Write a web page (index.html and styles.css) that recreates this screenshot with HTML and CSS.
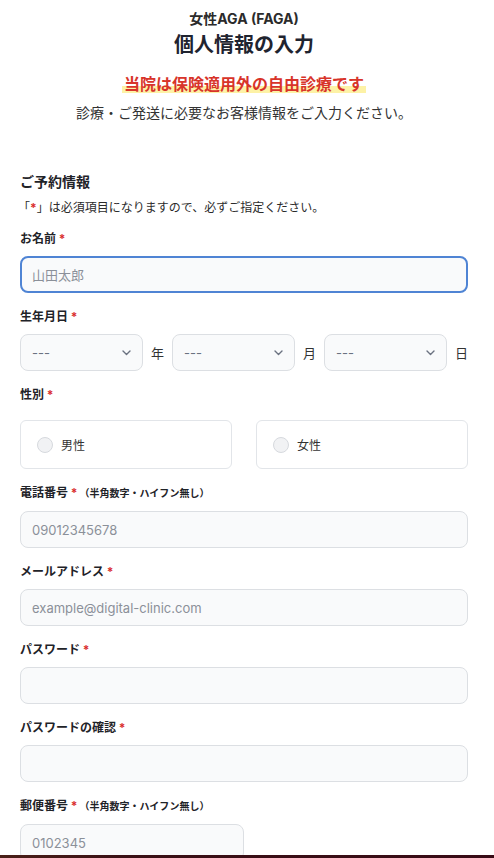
FILE: index.html
```html
<!DOCTYPE html>
<html lang="ja">
<head>
<meta charset="utf-8">
<title>個人情報の入力</title>
<link rel="stylesheet" href="styles.css">
</head>
<body>
<div class="page">
  <header class="head">
    <p class="head-sub">女性AGA (FAGA)</p>
    <h1 class="head-title">個人情報の入力</h1>
    <p class="head-alert"><span class="marker">当院は保険適用外の自由診療です</span></p>
    <p class="head-desc">診療・ご発送に必要なお客様情報をご入力ください。</p>
  </header>

  <section class="section">
    <h2 class="section-title">ご予約情報</h2>
    <p class="section-note">「<span class="req">*</span>」は必須項目になりますので、必ずご指定ください。</p>

    <div class="field first">
      <label class="label">お名前 <span class="req">*</span></label>
      <input class="input focused" type="text" placeholder="山田太郎">
    </div>

    <div class="field">
      <label class="label">生年月日 <span class="req">*</span></label>
      <div class="date-row">
        <div class="select-wrap">
          <select class="select"><option>---</option></select>
          <svg class="chev" width="9" height="6" viewBox="0 0 9 6"><path d="M1 1l3.5 3.5L8 1" fill="none" stroke="#6b7280" stroke-width="1.4" stroke-linecap="round" stroke-linejoin="round"/></svg>
        </div>
        <span class="unit">年</span>
        <div class="select-wrap">
          <select class="select"><option>---</option></select>
          <svg class="chev" width="9" height="6" viewBox="0 0 9 6"><path d="M1 1l3.5 3.5L8 1" fill="none" stroke="#6b7280" stroke-width="1.4" stroke-linecap="round" stroke-linejoin="round"/></svg>
        </div>
        <span class="unit">月</span>
        <div class="select-wrap">
          <select class="select"><option>---</option></select>
          <svg class="chev" width="9" height="6" viewBox="0 0 9 6"><path d="M1 1l3.5 3.5L8 1" fill="none" stroke="#6b7280" stroke-width="1.4" stroke-linecap="round" stroke-linejoin="round"/></svg>
        </div>
        <span class="unit">日</span>
      </div>
    </div>

    <div class="field">
      <label class="label">性別 <span class="req">*</span></label>
      <div class="radio-row">
        <label class="radio-card"><span class="radio"></span><span class="radio-text">男性</span></label>
        <label class="radio-card"><span class="radio"></span><span class="radio-text">女性</span></label>
      </div>
    </div>

    <div class="field">
      <label class="label">電話番号 <span class="req">*</span><span class="hint">（半角数字・ハイフン無し）</span></label>
      <input class="input" type="text" placeholder="09012345678">
    </div>

    <div class="field">
      <label class="label">メールアドレス <span class="req">*</span></label>
      <input class="input" type="text" placeholder="example@digital-clinic.com">
    </div>

    <div class="field">
      <label class="label">パスワード <span class="req">*</span></label>
      <input class="input" type="password">
    </div>

    <div class="field">
      <label class="label">パスワードの確認 <span class="req">*</span></label>
      <input class="input" type="password">
    </div>

    <div class="field">
      <label class="label">郵便番号 <span class="req">*</span><span class="hint">（半角数字・ハイフン無し）</span></label>
      <input class="input half" type="text" placeholder="0102345">
    </div>
  </section>
</div>
<div class="bottom-bar"></div>
</body>
</html>
```

FILE: styles.css
```css
* { box-sizing: border-box; }
html, body {
  margin: 0;
  padding: 0;
  background: #fff;
}
body {
  font-family: Inter, "Noto Sans CJK JP", sans-serif;
  color: #1f2328;
  overflow: hidden;
}
p, h1, h2 { margin: 0; }

.page {
  width: 448px;
  margin-left: 20px;
  padding-bottom: 40px;
}

.head { text-align: center; }
.head-sub {
  margin-top: 9px;
  font-size: 14px;
  line-height: 20px;
  font-weight: 700;
  color: #2b2b2b;
}
.head-title {
  margin-top: 2px;
  font-size: 20px;
  line-height: 28px;
  font-weight: 700;
  color: #1f2430;
}
.head-alert {
  margin-top: 13px;
  font-size: 16px;
  line-height: 24px;
  font-weight: 700;
  color: #d8342a;
}
.marker {
  padding: 0 2px;
  background: linear-gradient(transparent 58%, #fdf2a6 58%, #fdf2a6 96%, transparent 96%);
}
.head-desc {
  margin-top: 7px;
  font-size: 14px;
  line-height: 20px;
  color: #333;
}

.section { margin-top: 49px; }
.section-title {
  font-size: 14px;
  line-height: 20px;
  font-weight: 700;
  color: #1f2328;
}
.section-note {
  margin-top: 7px;
  font-size: 12px;
  line-height: 18px;
  color: #2b2b2b;
  margin-left: -2px;
}
.req { color: #d92c2c; font-weight: 700; }

.field { margin-top: 15px; }
.field.first { margin-top: 13px; }
.label {
  display: block;
  font-size: 12px;
  line-height: 17px;
  font-weight: 700;
  color: #1f2328;
  margin-bottom: 9px;
}
.hint {
  font-size: 10px;
  margin-left: 2px;
}

.input {
  display: block;
  width: 100%;
  height: 37px;
  border: 1px solid #dcdfe3;
  border-radius: 8px;
  background: #f9fafb;
  padding: 0 11px;
  font-family: Inter, "Noto Sans CJK JP", sans-serif;
  font-size: 13px;
  color: #1f2328;
  outline: none;
}
.input::placeholder { color: #8b9099; }
.input.focused {
  border: 2px solid #4f84d4;
  padding: 0 10px;
  background: #f9fafb;
}
.input.half { width: 50%; }

.date-row {
  display: flex;
  align-items: center;
  gap: 8px;
}
.select-wrap {
  position: relative;
  flex: 1;
}
.select {
  display: block;
  width: 100%;
  height: 37px;
  -webkit-appearance: none;
  appearance: none;
  border: 1px solid #dcdfe3;
  border-radius: 8px;
  background: #f9fafb;
  padding: 0 11px;
  font-family: Inter, "Noto Sans CJK JP", sans-serif;
  font-size: 13px;
  color: #6b7280;
  outline: none;
}
.chev {
  position: absolute;
  right: 12px;
  top: 16px;
}
.unit {
  width: 13px;
  font-size: 13px;
  color: #333;
  text-align: center;
}

.radio-row {
  display: flex;
  gap: 24px;
  margin-top: 17px;
}
.radio-card {
  flex: 1;
  height: 49px;
  display: flex;
  align-items: center;
  border: 1px solid #e2e5e9;
  border-radius: 6px;
  background: #fff;
  padding-left: 16px;
}
.radio {
  width: 16px;
  height: 16px;
  border-radius: 50%;
  border: 1px solid #d6d9de;
  background: #f1f2f4;
  margin-right: 8px;
}
.radio-text {
  font-size: 12px;
  color: #333;
}

.bottom-bar {
  position: fixed;
  left: 0;
  right: 0;
  bottom: 0;
  height: 3px;
  background: linear-gradient(90deg, #4a2018 0%, #3b1015 25%, #380b16 100%);
}
```
